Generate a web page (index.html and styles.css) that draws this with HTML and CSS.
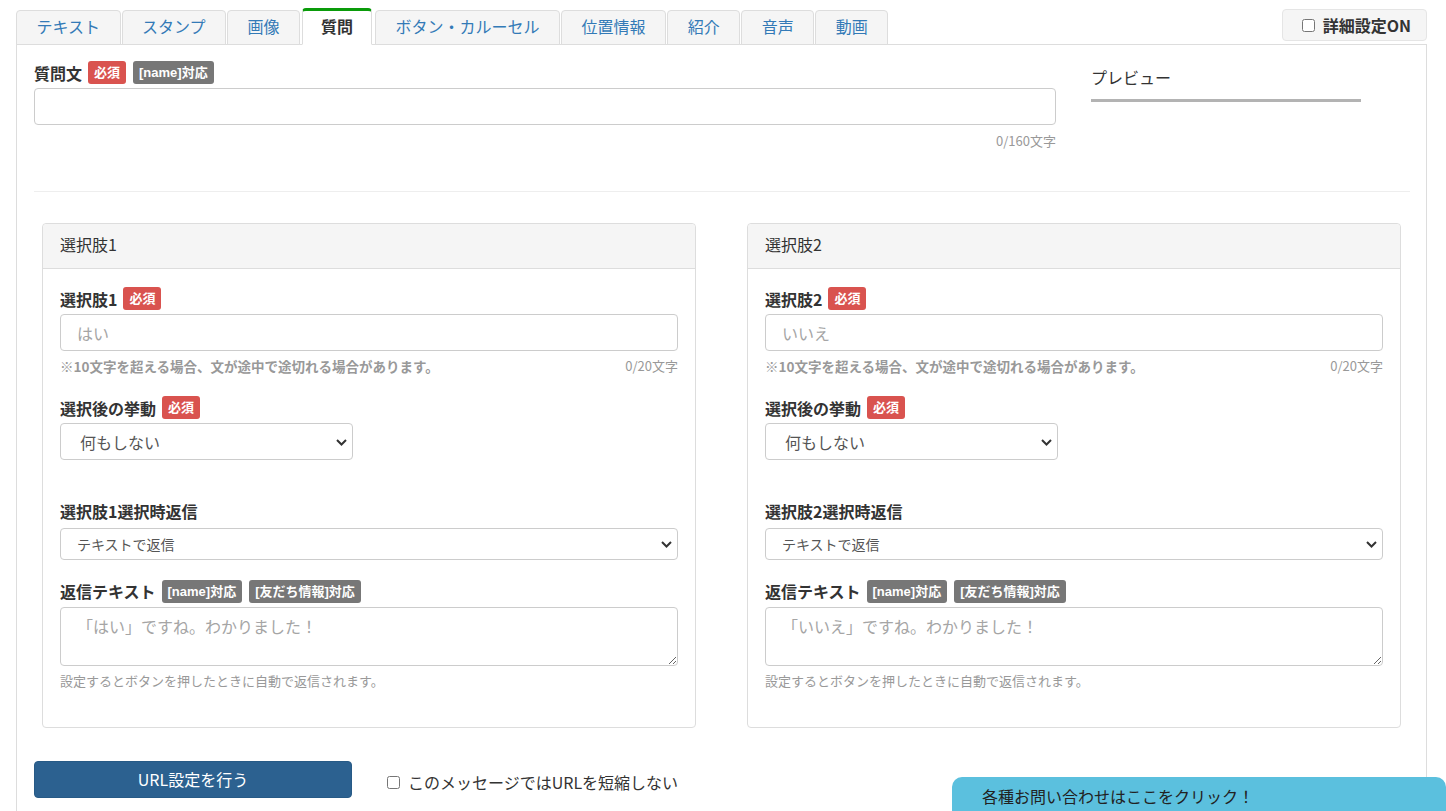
FILE: index.html
```html
<!DOCTYPE html>
<html lang="ja">
<head>
  <meta charset="UTF-8">
  <title>メッセージ作成 - 質問</title>
  <link rel="stylesheet" href="styles.css">
</head>
<body>

<div class="page">
  <div class="tabbar">
    <ul class="tabs">
      <li class="tab">テキスト</li>
      <li class="tab">スタンプ</li>
      <li class="tab">画像</li>
      <li class="tab active">質問</li>
      <li class="tab">ボタン・カルーセル</li>
      <li class="tab">位置情報</li>
      <li class="tab">紹介</li>
      <li class="tab">音声</li>
      <li class="tab">動画</li>
    </ul>
    <label class="detail-toggle"><input type="checkbox"> 詳細設定ON</label>
  </div>

  <div class="panel">
    <div class="question-row">
      <div class="question-main">
        <div class="field-label">質問文 <span class="badge badge-req">必須</span><span class="badge">[name]対応</span></div>
        <input class="form-control" type="text">
        <div class="counter">0/160文字</div>
      </div>
      <div class="preview">
        <div class="preview-title">プレビュー</div>
      </div>
    </div>

    <hr class="divider">

    <div class="choices">
      <div class="card">
        <div class="card-head">選択肢1</div>
        <div class="card-body">
          <div class="field-label">選択肢1 <span class="badge badge-req">必須</span></div>
          <input class="form-control" type="text" placeholder="はい">
          <div class="help-row">
            <span class="help-bold">※10文字を超える場合、文が途中で途切れる場合があります。</span>
            <span>0/20文字</span>
          </div>
          <div class="field-label gap-top">選択後の挙動 <span class="badge badge-req">必須</span></div>
          <div class="select-wrap short">
            <select class="form-select"><option>何もしない</option></select>
            <svg class="chevron" width="11" height="7" viewBox="0 0 11 7"><path d="M1 1l4.5 4.5L10 1" fill="none" stroke="#333" stroke-width="2"/></svg>
          </div>
          <div class="field-label plain">選択肢1選択時返信</div>
          <div class="select-wrap">
            <select class="form-select small"><option>テキストで返信</option></select>
            <svg class="chevron" width="11" height="7" viewBox="0 0 11 7"><path d="M1 1l4.5 4.5L10 1" fill="none" stroke="#333" stroke-width="2"/></svg>
          </div>
          <div class="field-label reply">返信テキスト <span class="badge">[name]対応</span><span class="badge">[友だち情報]対応</span></div>
          <textarea class="form-control textarea" placeholder="「はい」ですね。わかりました！"></textarea>
          <div class="help-text">設定するとボタンを押したときに自動で返信されます。</div>
        </div>
      </div>

      <div class="card">
        <div class="card-head">選択肢2</div>
        <div class="card-body">
          <div class="field-label">選択肢2 <span class="badge badge-req">必須</span></div>
          <input class="form-control" type="text" placeholder="いいえ">
          <div class="help-row">
            <span class="help-bold">※10文字を超える場合、文が途中で途切れる場合があります。</span>
            <span>0/20文字</span>
          </div>
          <div class="field-label gap-top">選択後の挙動 <span class="badge badge-req">必須</span></div>
          <div class="select-wrap short">
            <select class="form-select"><option>何もしない</option></select>
            <svg class="chevron" width="11" height="7" viewBox="0 0 11 7"><path d="M1 1l4.5 4.5L10 1" fill="none" stroke="#333" stroke-width="2"/></svg>
          </div>
          <div class="field-label plain">選択肢2選択時返信</div>
          <div class="select-wrap">
            <select class="form-select small"><option>テキストで返信</option></select>
            <svg class="chevron" width="11" height="7" viewBox="0 0 11 7"><path d="M1 1l4.5 4.5L10 1" fill="none" stroke="#333" stroke-width="2"/></svg>
          </div>
          <div class="field-label reply">返信テキスト <span class="badge">[name]対応</span><span class="badge">[友だち情報]対応</span></div>
          <textarea class="form-control textarea" placeholder="「いいえ」ですね。わかりました！"></textarea>
          <div class="help-text">設定するとボタンを押したときに自動で返信されます。</div>
        </div>
      </div>
    </div>

    <div class="url-row">
      <button class="btn-url">URL設定を行う</button>
      <label class="shorten"><input type="checkbox"> このメッセージではURLを短縮しない</label>
    </div>
  </div>
</div>

<div class="contact-tab">各種お問い合わせはここをクリック！</div>

</body>
</html>
```

FILE: styles.css
```css
body {
  margin: 0;
  font-family: "Noto Sans CJK JP", "Liberation Sans", sans-serif;
  font-size: 16px;
  color: #333;
  background: #fff;
}
.page {
  padding: 8px 19px 0 16px;
}
.tabbar {
  display: flex;
  justify-content: space-between;
  align-items: flex-start;
}
.tabs {
  display: flex;
  align-items: flex-end;
  list-style: none;
  margin: 0 0 -1px 0;
  padding: 0;
  position: relative;
}
.tab {
  box-sizing: border-box;
  height: 35px;
  margin-top: 1px;
  margin-right: 1px;
  padding: 0 19.5px 3px;
  line-height: 30px;
  border: 1px solid #ddd;
  border-radius: 4px 4px 0 0;
  background: #f5f5f5;
  color: #337ab7;
  white-space: nowrap;
}
.tab.active {
  height: 37px;
  margin: 0 3px 0 1px;
  padding: 0 18px 3px;
  background: #fff;
  border-top: 3px solid #0a9b0a;
  border-bottom-color: #fff;
  color: #333;
  font-weight: bold;
  line-height: 30px;
}
.detail-toggle {
  box-sizing: border-box;
  display: flex;
  align-items: center;
  gap: 8px;
  height: 32px;
  margin-top: 1px;
  padding: 0 15px 0 19px;
  border: 1px solid #e5e5e5;
  border-radius: 4px;
  background: #f5f5f5;
  font-weight: bold;
}
.detail-toggle input {
  margin: 0;
}
.panel {
  border: 1px solid #ddd;
  padding: 16px 16px 40px 17px;
  min-height: 760px;
}
.question-row {
  display: flex;
  gap: 35px;
}
.question-main {
  width: 1022px;
}
.field-label {
  display: flex;
  align-items: center;
  gap: 6px;
  min-height: 23px;
  margin-bottom: 4px;
  font-weight: bold;
  line-height: 20px;
}
.field-label.gap-top {
  margin-top: 21px;
}
.field-label.plain {
  margin-top: 39px;
  margin-bottom: 6px;
}
.field-label.reply {
  margin-top: 19px;
  min-height: 24px;
}
.badge {
  display: inline-block;
  padding: 3px 6px;
  border-radius: 3px;
  background: #777;
  color: #fff;
  font-family: "Liberation Sans", "Noto Sans CJK JP", sans-serif;
  font-size: 13px;
  font-weight: bold;
  line-height: 17px;
}
.badge + .badge {
  margin-left: 1px;
}
.badge-req {
  background: #d9534f;
}
.form-control {
  box-sizing: border-box;
  display: block;
  width: 100%;
  height: 37px;
  padding: 6px 16px;
  border: 1px solid #ccc;
  border-radius: 4px;
  font-family: inherit;
  font-size: 16px;
  color: #555;
}
.form-control::placeholder {
  color: #a5a5a5;
}
.textarea {
  height: 59px;
  padding: 7px 16px;
  resize: vertical;
  line-height: 22px;
}
.counter {
  margin-top: 7px;
  text-align: right;
  font-size: 13px;
  line-height: 18px;
  color: #999;
}
.preview {
  flex: 1;
}
.preview-title {
  width: 270px;
  padding: 6px 0 12px;
  line-height: 20px;
  border-bottom: 3px solid #b3b3b3;
}
.divider {
  margin: 41px 0 0;
  border: 0;
  border-top: 1px solid #eee;
}
.choices {
  display: flex;
  gap: 51px;
  margin-top: 31px;
  padding: 0 9px 0 8px;
}
.card {
  flex: 1;
  border: 1px solid #ddd;
  border-radius: 4px;
}
.card-head {
  padding: 0 17px 4px;
  line-height: 40px;
  background: #f5f5f5;
  border-bottom: 1px solid #ddd;
  border-radius: 4px 4px 0 0;
}
.card-body {
  padding: 18px 17px 37px;
}
.help-row {
  display: flex;
  justify-content: space-between;
  margin-top: 6px;
  font-size: 13px;
  line-height: 18px;
  color: #999;
}
.help-bold {
  font-weight: bold;
  font-size: 13.5px;
}
.help-text {
  margin-top: 6px;
  font-size: 13px;
  line-height: 18px;
  color: #999;
}
.select-wrap {
  position: relative;
}
.select-wrap.short {
  width: 293px;
}
.form-select {
  box-sizing: border-box;
  display: block;
  width: 100%;
  height: 37px;
  padding: 0 30px 0 19px;
  border: 1px solid #ccc;
  border-radius: 4px;
  background: #fff;
  font-family: inherit;
  font-size: 16px;
  color: #555;
  appearance: none;
  -webkit-appearance: none;
}
.form-select.small {
  height: 32px;
  padding-left: 16px;
  font-size: 14px;
}
.chevron {
  position: absolute;
  right: 6px;
  top: 50%;
  margin-top: -3px;
  pointer-events: none;
}
.url-row {
  display: flex;
  align-items: center;
  gap: 35px;
  margin-top: 33px;
}
.btn-url {
  width: 318px;
  height: 37px;
  padding: 0 0 2px;
  border: 1px solid #275a86;
  border-radius: 4px;
  background: #2c6190;
  color: #fff;
  font-family: inherit;
  font-size: 16px;
}
.shorten {
  display: flex;
  align-items: center;
  gap: 8px;
  margin-top: 5px;
  line-height: 20px;
}
.shorten input {
  margin: 0;
}
.contact-tab {
  position: fixed;
  right: 0;
  bottom: 0;
  box-sizing: border-box;
  width: 494px;
  height: 34px;
  padding: 8px 0 0 30px;
  border-radius: 10px 10px 0 0;
  background: #5bc0de;
  color: #222;
  line-height: 22px;
}
```
